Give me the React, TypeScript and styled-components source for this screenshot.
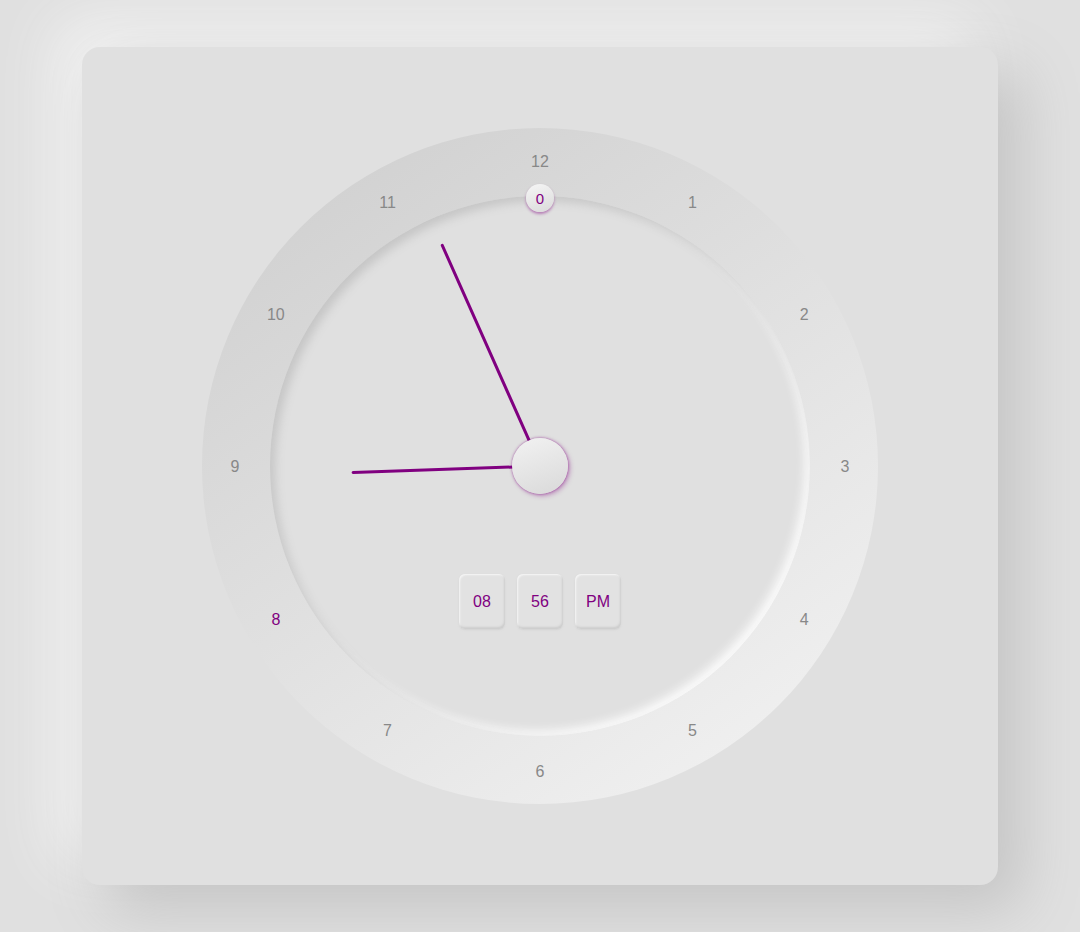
import styled, { createGlobalStyle } from "styled-components";

const GlobalStyle = createGlobalStyle`
  html, body {
    margin: 0;
    padding: 0;
    background: #e0e0e0;
    font-family: "Liberation Sans", Arial, sans-serif;
  }
`;

const Page = styled.div`
  width: 1080px;
  height: 932px;
  box-sizing: border-box;
  padding: 47px 82px;
  overflow: hidden;
`;

const Card = styled.div`
  width: 916px;
  height: 838px;
  border-radius: 18px;
  background: #e0e0e0;
  box-shadow: 24px 24px 60px #c4c4c4, -24px -24px 60px #f4f4f4;
  display: flex;
  align-items: center;
  justify-content: center;
`;

const Ring = styled.div`
  position: relative;
  width: 676px;
  height: 676px;
  border-radius: 50%;
  background: linear-gradient(145deg, #cdcdcd, #f4f4f4);
  display: flex;
  align-items: center;
  justify-content: center;
`;

const Dial = styled.div`
  position: relative;
  width: 540px;
  height: 540px;
  box-sizing: border-box;
  padding-top: 378px;
  border-radius: 50%;
  background: #e0e0e0;
  box-shadow: inset 5px 5px 10px #c6c6c6, inset -5px -5px 10px #fbfbfb;
  display: flex;
  justify-content: center;
  align-items: flex-start;
`;

const Numeral = styled.span<{ $active?: boolean }>`
  position: absolute;
  transform: translate(-50%, -50%);
  font-size: 16px;
  color: ${(p) => (p.$active ? "#800080" : "#888888")};
`;

const TopKnob = styled.div`
  position: absolute;
  left: 256px;
  top: -12px;
  width: 28px;
  height: 28px;
  border-radius: 50%;
  background: linear-gradient(160deg, #f6f6f6, #dadada);
  box-shadow: 0 2px 3px rgba(128, 0, 128, 0.45);
  display: flex;
  align-items: center;
  justify-content: center;
  font-size: 15px;
  color: #800080;
`;

const Hand = styled.div<{ $length: number }>`
  position: absolute;
  left: 268.5px;
  bottom: 270px;
  width: 3px;
  height: ${(p) => p.$length}px;
  background: #800080;
  border-radius: 2px;
  transform-origin: 50% 100%;
`;

const CenterKnob = styled.div`
  position: absolute;
  left: 242px;
  top: 242px;
  width: 56px;
  height: 56px;
  border-radius: 50%;
  background: linear-gradient(160deg, #f2f2f2, #d9d9d9);
  box-shadow: 0 0 3px rgba(128, 0, 128, 0.6), 2px 2px 5px rgba(128, 0, 128, 0.35);
`;

const Digital = styled.div`
  display: flex;
  gap: 12px;
`;

const Cell = styled.div`
  width: 46px;
  height: 55px;
  box-sizing: border-box;
  border-radius: 6px;
  background: #e2e2e2;
  box-shadow: inset -1px -2px 2px #cdcdcd, inset 1px 1px 2px #f7f7f7, 0 1px 2px #d2d2d2;
  display: flex;
  align-items: center;
  justify-content: center;
  font-size: 16px;
  color: #800080;
`;

const hours = [12, 1, 2, 3, 4, 5, 6, 7, 8, 9, 10, 11];

export default function App() {
  const h = 8;
  const m = 56;
  const hourAngle = (h + m / 60) * 30;
  const minuteAngle = m * 6;
  return (
    <>
      <GlobalStyle />
      <Page>
        <Card>
          <Ring>
            {hours.map((n, i) => {
              const a = (i * 30 * Math.PI) / 180;
              const r = 305;
              return (
                <Numeral
                  key={n}
                  $active={n === h}
                  style={{ left: 338 + r * Math.sin(a), top: 338 - r * Math.cos(a) + 1 }}
                >
                  {n}
                </Numeral>
              );
            })}
            <Dial>
              <TopKnob>0</TopKnob>
              <Hand $length={189} style={{ transform: `rotate(${hourAngle}deg)` }} />
              <Hand $length={243} style={{ transform: `rotate(${minuteAngle}deg)` }} />
              <CenterKnob />
              <Digital>
                <Cell>08</Cell>
                <Cell>56</Cell>
                <Cell>PM</Cell>
              </Digital>
            </Dial>
          </Ring>
        </Card>
      </Page>
    </>
  );
}
